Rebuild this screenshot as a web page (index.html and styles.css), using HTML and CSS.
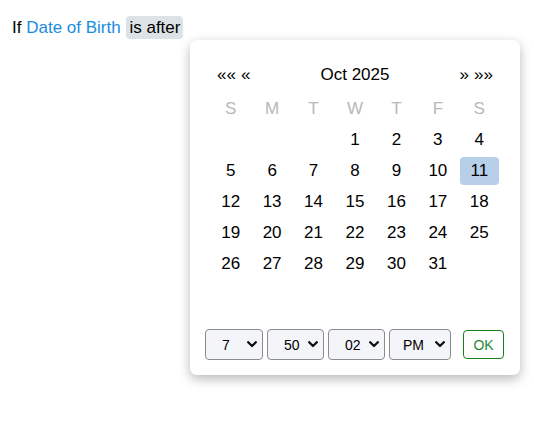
FILE: index.html
```html
<!DOCTYPE html>
<html lang="en">
<head>
<meta charset="utf-8">
<title>Date rule</title>
<link rel="stylesheet" href="styles.css">
</head>
<body>
<div class="rule">
  <span class="plain">If</span>
  <span class="field">Date of Birth</span>
  <span class="op">is after</span>
</div>

<div class="picker">
  <div class="cal-head">
    <div class="nav"><span>««</span><span>«</span></div>
    <div class="title">Oct 2025</div>
    <div class="nav"><span>»</span><span>»»</span></div>
  </div>
  <div class="grid">
    <div class="wd">S</div><div class="wd">M</div><div class="wd">T</div><div class="wd">W</div><div class="wd">T</div><div class="wd">F</div><div class="wd">S</div>
    <div class="day"></div><div class="day"></div><div class="day"></div>
    <div class="day"><span>1</span></div><div class="day"><span>2</span></div><div class="day"><span>3</span></div><div class="day"><span>4</span></div>
    <div class="day"><span>5</span></div><div class="day"><span>6</span></div><div class="day"><span>7</span></div><div class="day"><span>8</span></div><div class="day"><span>9</span></div><div class="day"><span>10</span></div><div class="day"><span class="sel">11</span></div>
    <div class="day"><span>12</span></div><div class="day"><span>13</span></div><div class="day"><span>14</span></div><div class="day"><span>15</span></div><div class="day"><span>16</span></div><div class="day"><span>17</span></div><div class="day"><span>18</span></div>
    <div class="day"><span>19</span></div><div class="day"><span>20</span></div><div class="day"><span>21</span></div><div class="day"><span>22</span></div><div class="day"><span>23</span></div><div class="day"><span>24</span></div><div class="day"><span>25</span></div>
    <div class="day"><span>26</span></div><div class="day"><span>27</span></div><div class="day"><span>28</span></div><div class="day"><span>29</span></div><div class="day"><span>30</span></div><div class="day"><span>31</span></div><div class="day"></div>
    <div class="day"></div><div class="day"></div><div class="day"></div><div class="day"></div><div class="day"></div><div class="day"></div><div class="day"></div>
  </div>
  <div class="time">
    <div class="sel-box w-h"><span class="val">7</span><svg class="chev" width="10" height="7" viewBox="0 0 10 7"><path d="M1.2 1.2 L5 5 L8.8 1.2" fill="none" stroke="#111" stroke-width="2.3" stroke-linecap="round" stroke-linejoin="round"/></svg></div>
    <div class="sel-box w-m"><span class="val">50</span><svg class="chev" width="10" height="7" viewBox="0 0 10 7"><path d="M1.2 1.2 L5 5 L8.8 1.2" fill="none" stroke="#111" stroke-width="2.3" stroke-linecap="round" stroke-linejoin="round"/></svg></div>
    <div class="sel-box w-s"><span class="val">02</span><svg class="chev" width="10" height="7" viewBox="0 0 10 7"><path d="M1.2 1.2 L5 5 L8.8 1.2" fill="none" stroke="#111" stroke-width="2.3" stroke-linecap="round" stroke-linejoin="round"/></svg></div>
    <div class="sel-box w-p"><span class="val">PM</span><svg class="chev" width="10" height="7" viewBox="0 0 10 7"><path d="M1.2 1.2 L5 5 L8.8 1.2" fill="none" stroke="#111" stroke-width="2.3" stroke-linecap="round" stroke-linejoin="round"/></svg></div>
    <button class="ok">OK</button>
  </div>
</div>
</body>
</html>
```

FILE: styles.css
```css
html, body {
  background: #fff;
}
body {
  margin: 8px;
  font-family: "Liberation Sans", Arial, sans-serif;
  color: #000;
}
.rule {
  padding: 10px 4px;
  font-size: 17px;
  line-height: 20px;
}
.field {
  color: #1a8cdf;
}
.op {
  background: #dce2e6;
  border-radius: 4px;
  padding: 2px 3px 2px 3px;
  margin-left: 1px;
}
.picker {
  position: absolute;
  left: 190px;
  top: 40px;
  width: 330px;
  height: 335px;
  box-sizing: border-box;
  background: #fff;
  border-radius: 7px;
  box-shadow: 0 4px 12px rgba(0, 0, 0, 0.28);
  padding: 23px 15px 15px 15px;
  display: flex;
  flex-direction: column;
}
.cal-head {
  display: flex;
  justify-content: space-between;
  align-items: center;
  padding: 0 12px;
  height: 24px;
  font-size: 17px;
  margin-bottom: 6px;
}
.nav {
  display: flex;
  gap: 5px;
  width: 70px;
}
.nav:last-child {
  justify-content: flex-end;
}
.title {
  flex: 1;
  text-align: center;
}
.grid {
  display: grid;
  grid-template-columns: repeat(7, 1fr);
  grid-auto-rows: 31px;
  margin: 0 5px;
  font-size: 17px;
}
.wd {
  display: flex;
  align-items: center;
  justify-content: center;
  color: #b8b8b8;
}
.day {
  display: flex;
  align-items: center;
  justify-content: center;
}
.day span {
  display: flex;
  align-items: center;
  justify-content: center;
  width: 39px;
  height: 28px;
  border-radius: 4px;
}
.day .sel {
  background: #b7cfe9;
}
.time {
  margin-top: auto;
  display: flex;
  align-items: center;
  gap: 4px;
  height: 31px;
}
.sel-box {
  box-sizing: border-box;
  height: 31px;
  border: 1px solid #8c8c8c;
  border-radius: 4px;
  background: #f3f5f9;
  display: flex;
  align-items: center;
  justify-content: space-between;
  padding: 0 5px 0 16px;
  font-size: 14px;
}
.w-h { width: 58px; }
.w-m { width: 57px; }
.w-s { width: 57px; }
.w-p { width: 62px; padding-left: 13px; }
.chev {
  display: block;
}
.ok {
  margin-left: auto;
  box-sizing: border-box;
  width: 41px;
  height: 29px;
  border: 1px solid #1c7d1c;
  border-radius: 4px;
  background: #fff;
  color: #1f8a3c;
  font-family: "Liberation Sans", Arial, sans-serif;
  font-size: 14px;
  padding: 0;
  margin-right: 1px;
}
```
